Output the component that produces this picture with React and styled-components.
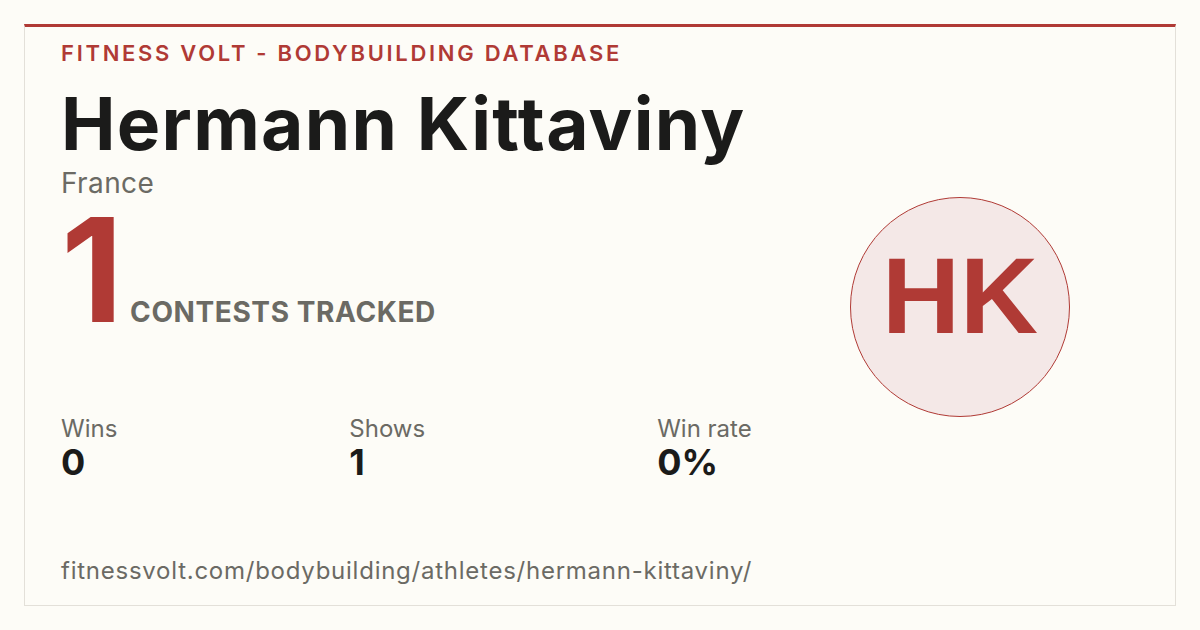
import React from "react";
import styled, { createGlobalStyle } from "styled-components";

const Global = createGlobalStyle`
  html, body { margin: 0; padding: 0; background: #fdfcf7; }
  body { font-family: Inter, "Noto Sans", sans-serif; }
`;

const Page = styled.div`
  width: 1200px;
  height: 630px;
  box-sizing: border-box;
  padding: 24px;
  background: #fdfcf7;
`;

const Card = styled.div`
  box-sizing: border-box;
  height: 582px;
  border: 1px solid #e3e0d9;
  border-top: 3px solid #b03a35;
  padding: 15px 36px 0 36px;
  display: flex;
  flex-direction: column;
`;

const Eyebrow = styled.div`
  font-size: 22px;
  line-height: 23px;
  font-weight: 600;
  letter-spacing: 2.7px;
  color: #b03a35;
  text-transform: uppercase;
`;

const Body = styled.div`
  display: flex;
  align-items: flex-start;
  margin-top: 22px;
`;

const Main = styled.div`
  flex: 1;
  display: flex;
  flex-direction: column;
`;

const Name = styled.h1`
  margin: 0;
  font-size: 73px;
  line-height: 73px;
  font-weight: 700;
  letter-spacing: 1.3px;
  color: #1b1b1a;
`;

const Country = styled.div`
  margin-top: 9px;
  font-size: 28px;
  line-height: 28px;
  letter-spacing: 0.4px;
  color: #6b6a64;
`;

const Tracked = styled.div`
  display: flex;
  align-items: baseline;
  margin-top: 18px;
`;

const BigNumber = styled.div`
  font-size: 144px;
  line-height: 110px;
  font-weight: 700;
  color: #b03a35;
  letter-spacing: -6px;
`;

const TrackedLabel = styled.div`
  margin-left: 13px;
  font-size: 28px;
  line-height: 28px;
  font-weight: 700;
  letter-spacing: 0.6px;
  color: #6b6a64;
`;

const Stats = styled.div`
  display: flex;
  gap: 232px;
  margin-top: 91px;
`;

const Stat = styled.div`
  display: flex;
  flex-direction: column;
  gap: 3px;
`;

const StatLabel = styled.div`
  font-size: 24px;
  line-height: 24px;
  color: #6b6a64;
`;

const StatValue = styled.div`
  font-size: 36px;
  line-height: 36px;
  font-weight: 700;
  color: #1b1b1a;
`;

const Avatar = styled.div`
  width: 220px;
  height: 220px;
  box-sizing: border-box;
  margin-top: 110px;
  margin-right: 69px;
  border-radius: 50%;
  border: 1.5px solid #b03a35;
  background: #f4e8e7;
  display: flex;
  align-items: center;
  justify-content: center;
  padding-bottom: 24px;
  font-family: "Liberation Sans", Arial, sans-serif;
  font-weight: 700;
  font-size: 108px;
  color: #b03a35;
`;

const Footer = styled.div`
  margin-top: 79px;
  font-size: 24px;
  line-height: 24px;
  color: #6b6a64;
  letter-spacing: 0.75px;
`;

const stats = [
  { label: "Wins", value: "0" },
  { label: "Shows", value: "1" },
  { label: "Win rate", value: "0%" },
];

export default function App() {
  return (
    <Page>
      <Global />
      <Card>
        <Eyebrow>Fitness Volt - Bodybuilding Database</Eyebrow>
        <Body>
          <Main>
            <Name>Hermann Kittaviny</Name>
            <Country>France</Country>
            <Tracked>
              <BigNumber>1</BigNumber>
              <TrackedLabel>CONTESTS TRACKED</TrackedLabel>
            </Tracked>
            <Stats>
              {stats.map((s) => (
                <Stat key={s.label}>
                  <StatLabel>{s.label}</StatLabel>
                  <StatValue>{s.value}</StatValue>
                </Stat>
              ))}
            </Stats>
          </Main>
          <Avatar>HK</Avatar>
        </Body>
        <Footer>fitnessvolt.com/bodybuilding/athletes/hermann-kittaviny/</Footer>
      </Card>
    </Page>
  );
}
